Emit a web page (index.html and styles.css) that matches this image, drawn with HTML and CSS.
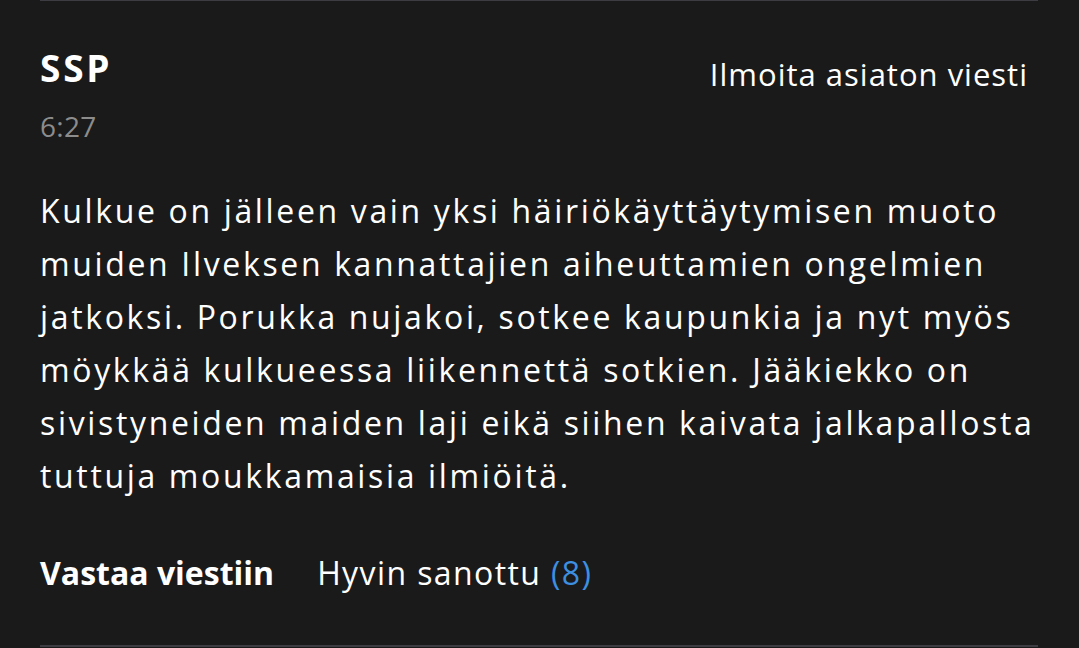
FILE: index.html
```html
<!DOCTYPE html>
<html lang="fi">
<head>
<meta charset="utf-8">
<link rel="stylesheet" href="styles.css">
</head>
<body>
<article class="comment">
  <header class="comment-head">
    <div class="author">
      <div class="name">SSP</div>
      <div class="time">6:27</div>
    </div>
    <a class="report">Ilmoita asiaton viesti</a>
  </header>
  <p class="text">Kulkue on jälleen vain yksi häiriökäyttäytymisen muoto<br>muiden Ilveksen kannattajien aiheuttamien ongelmien<br>jatkoksi. Porukka nujakoi, sotkee kaupunkia ja nyt myös<br>möykkää kulkueessa liikennettä sotkien. Jääkiekko on<br>sivistyneiden maiden laji eikä siihen kaivata jalkapallosta<br>tuttuja moukkamaisia ilmiöitä.</p>
  <footer class="actions">
    <a class="reply">Vastaa viestiin</a>
    <a class="like">Hyvin sanottu <span class="count">(8)</span></a>
  </footer>
</article>
</body>
</html>
```
FILE: styles.css
```css
html, body {
  margin: 0;
  padding: 0;
  background: #1a1a1a;
  height: 100%;
}
body {
  font-family: "Open Sans", "Liberation Sans", sans-serif;
  color: #ffffff;
  padding-left: 40px;
  overflow: hidden;
}
.comment {
  width: 998px;
  border-top: 1px solid #3c3c42;
  border-bottom: 2px solid #3c3c42;
  box-sizing: border-box;
  height: 647px;
  display: flex;
  flex-direction: column;
}
.comment-head {
  display: flex;
  justify-content: space-between;
  align-items: flex-start;
  padding-top: 43px;
  padding-right: 11px;
}
.name {
  font-size: 37px;
  font-weight: 700;
  line-height: 48px;
  letter-spacing: 2.8px;
}
.time {
  font-size: 28px;
  color: #8c8c8c;
  line-height: 40px;
  margin-top: 14px;
  letter-spacing: 0.3px;
}
.report {
  font-size: 31px;
  line-height: 48px;
  margin-top: 6px;
  letter-spacing: 1px;
  margin-right: -1px;
}
.text {
  margin: 38px 0 0;
  font-size: 32px;
  line-height: 53px;
  letter-spacing: 2.65px;
}
.actions {
  display: flex;
  align-items: baseline;
  gap: 43px;
  margin-top: 47px;
  font-size: 32px;
  line-height: 48px;
}
.reply {
  font-weight: 700;
}
.like {
  letter-spacing: 1.4px;
}
.count {
  color: #3d8fe0;
}
```
